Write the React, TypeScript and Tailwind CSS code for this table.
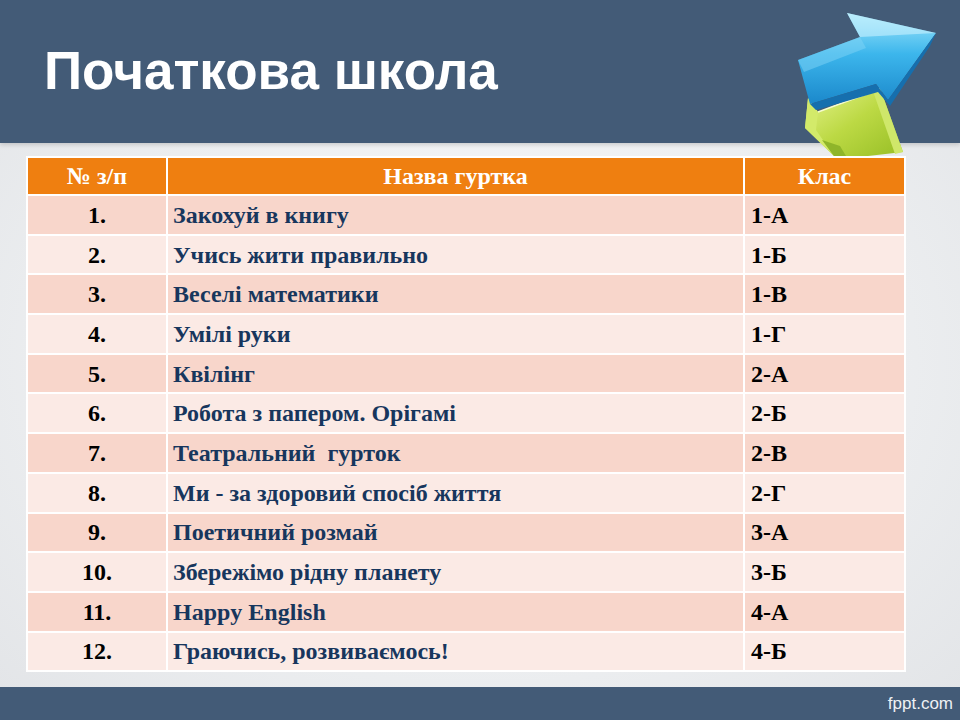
const rows: [string, string, string][] = [
  ["1.", "Закохуй в книгу", "1-А"],
  ["2.", "Учись жити правильно", "1-Б"],
  ["3.", "Веселі математики", "1-В"],
  ["4.", "Умілі руки", "1-Г"],
  ["5.", "Квілінг", "2-А"],
  ["6.", "Робота з папером. Орігамі", "2-Б"],
  ["7.", "Театральний  гурток", "2-В"],
  ["8.", "Ми - за здоровий спосіб життя", "2-Г"],
  ["9.", "Поетичний розмай", "3-А"],
  ["10.", "Збережімо рідну планету", "3-Б"],
  ["11.", "Happy English", "4-А"],
  ["12.", "Граючись, розвиваємось!", "4-Б"],
];

function Arrows() {
  return (
    <svg className="absolute left-[795px] top-0" width="165" height="156" viewBox="795 0 165 156">
      <defs>
        <linearGradient id="blueTop" x1="0" y1="0" x2="0" y2="1">
          <stop offset="0" stopColor="#9fe6fb" />
          <stop offset="0.45" stopColor="#3cb6ec" />
          <stop offset="1" stopColor="#1b88cb" />
        </linearGradient>
        <linearGradient id="greenTop" x1="0" y1="0" x2="1" y2="1">
          <stop offset="0" stopColor="#e6f48e" />
          <stop offset="0.5" stopColor="#bcd944" />
          <stop offset="1" stopColor="#98bf26" />
        </linearGradient>
      </defs>
      {/* green arrow, behind */}
      <polygon points="808,98 818,112 880,88 903,152 868,156 834,156 805,128" fill="url(#greenTop)" />
      <polygon points="808,98 818,112 816,130 834,156 805,128" fill="#d3ea6a" />
      <polygon points="822,140 840,146 846,156 834,156" fill="#8fb52a" />
      <polygon points="880,88 903,152 895,154 874,94" fill="#cfe76a" />
      <line x1="818" y1="112" x2="880" y2="89" stroke="#f6fcd0" strokeWidth="1.5" />
      {/* blue arrow */}
      <polygon points="798,60 860,37 847,13 936,33 888,100 876,84 810,104" fill="url(#blueTop)" />
      <polygon points="810,104 876,84 888,100 936,33 930,46 890,106 878,92 816,110" fill="#166fae" />
      <polygon points="847,13 936,33 860,37" fill="#d2f4ff" opacity="0.55" />
      <polygon points="798,60 860,37 866,48 804,72" fill="#7fd4f5" opacity="0.5" />
    </svg>
  );
}

export default function App() {
  return (
    <div className="relative w-[960px] h-[720px] overflow-hidden flex flex-col bg-[radial-gradient(ellipse_at_center,#fbfbfc_0%,#eceef0_60%,#e2e4e7_100%)]">
      <div className="h-[143px] shrink-0 bg-[#435b77] flex items-center pl-[44px] shadow-[0_2px_4px_rgba(0,0,0,0.15)]">
        <h1 className="text-white font-bold text-[53px] leading-none -mt-[3px] font-['Liberation_Sans',Arial,sans-serif]">
          Початкова школа
        </h1>
      </div>

      <div className="pt-[13px] pl-[26px] font-['Liberation_Serif','Times_New_Roman',serif] font-bold text-[24px] leading-none">
        <table className="w-[880px] border-collapse table-fixed">
          <colgroup>
            <col className="w-[140px]" />
            <col className="w-[577px]" />
            <col />
          </colgroup>
          <thead>
            <tr className="h-[38px] bg-[#ef7f10] text-white">
              <th className="border-2 border-white text-center">№ з/п</th>
              <th className="border-2 border-white text-center">Назва гуртка</th>
              <th className="border-2 border-white text-center">Клас</th>
            </tr>
          </thead>
          <tbody>
            {rows.map(([n, name, cls], i) => (
              <tr key={n} className={`h-[39.7px] ${i % 2 === 0 ? "bg-[#f8d6cb]" : "bg-[#fbeae5]"}`}>
                <td className="border-2 border-white text-center text-black">{n}</td>
                <td className="border-2 border-white pl-[5px] text-[#17365d] whitespace-pre">{name}</td>
                <td className="border-2 border-white pl-[6px] text-black">{cls}</td>
              </tr>
            ))}
          </tbody>
        </table>
      </div>

      <div className="flex-1" />
      <div className="h-[33px] shrink-0 bg-[#435b77] flex items-center justify-end pr-[7px]">
        <span className="text-[#eef1f4] text-[17px] font-['Liberation_Sans',Arial,sans-serif]">fppt.com</span>
      </div>

      <Arrows />
    </div>
  );
}
